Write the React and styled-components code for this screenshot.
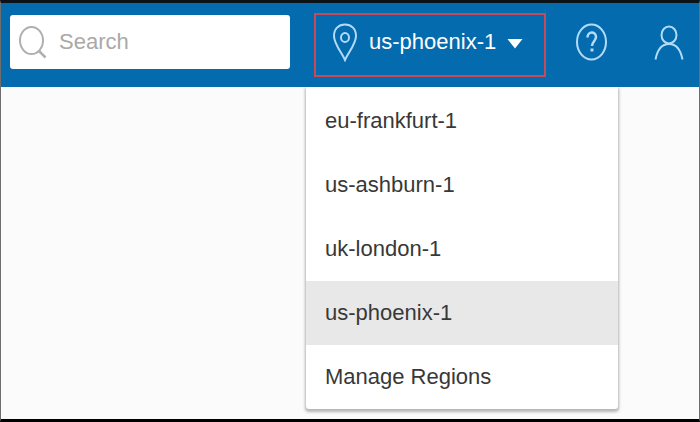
import React, { useState } from "react";
import styled, { createGlobalStyle } from "styled-components";

const colors = {
  bar: "#046bae",
  icon: "#b2dbf8",
  outline: "#c44c5a",
  text: "#383838",
  placeholder: "#a9a9a9",
};

const GlobalStyle = createGlobalStyle`
  * {
    box-sizing: border-box;
  }

  body {
    margin: 0;
    font-family: "Liberation Sans", Arial, sans-serif;
    font-size: 22px;
    line-height: 28px;
  }

  button,
  input {
    font: inherit;
  }
`;

const Page = styled.div`
  min-height: 100vh;
  background: #fbfbfb;
  border: 1px solid #6e6e6e;
  border-top: 3px solid #0b1218;
  border-bottom: 3px solid #000;
`;

const TopBar = styled.header`
  display: flex;
  align-items: center;
  height: 84px;
  padding: 0 14px 0 9px;
  background: ${colors.bar};
`;

const SearchBox = styled.label`
  display: flex;
  flex: 1;
  align-items: center;
  gap: 12px;
  min-width: 0;
  height: 54px;
  margin: 0 24px 6px 0;
  padding: 0 9px;
  background: #fff;
  border-radius: 3px;
`;

const SearchInput = styled.input`
  flex: 1;
  min-width: 0;
  padding: 0;
  border: 0;
  outline: 0;
  background: transparent;
  color: ${colors.text};

  &::placeholder {
    color: ${colors.placeholder};
    opacity: 1;
  }
`;

const RegionPicker = styled.div`
  position: relative;
  display: flex;
  align-items: center;
  height: 100%;
`;

const RegionButton = styled.button`
  display: flex;
  align-items: center;
  gap: 11px;
  width: 232px;
  height: 64px;
  padding: 0 16px 6px;
  background: transparent;
  border: 2px solid ${colors.outline};
  color: #fff;
  cursor: pointer;
`;

const Menu = styled.ul`
  position: absolute;
  top: 100%;
  left: -8px;
  width: 312px;
  margin: 0;
  padding: 2px 0 0;
  list-style: none;
  background: #fff;
  border-radius: 0 0 3px 3px;
  box-shadow: 0 2px 3px 1px rgba(0, 0, 0, 0.28);
  clip-path: inset(0 -8px -8px);
`;

const MenuItem = styled.button`
  display: block;
  width: 100%;
  height: 64px;
  padding: 0 19px;
  border: 0;
  background: ${({ $active }) => ($active ? "#e8e8e8" : "transparent")};
  color: ${colors.text};
  text-align: left;
  cursor: pointer;
`;

const IconButton = styled.button`
  display: flex;
  justify-content: center;
  width: 32px;
  margin-left: ${({ $gap }) => $gap}px;
  padding: 0 0 6px;
  border: 0;
  background: transparent;
  cursor: pointer;
`;

const Icon = styled.svg`
  flex: none;
  fill: none;
  stroke: ${({ $color }) => $color || colors.icon};
  stroke-width: 2;
`;

const Caret = styled.svg`
  flex: none;
  fill: #fff;
`;

const regions = ["eu-frankfurt-1", "us-ashburn-1", "uk-london-1", "us-phoenix-1"];

const SearchIcon = () => (
  <Icon width="28" height="34" viewBox="0 0 28 34" $color="#b0b0b0" aria-hidden="true">
    <ellipse cx="12.500" cy="15.500" rx="11.500" ry="13.500" />
    <path d="M20 26 L26.500 32.500" strokeWidth="2.500" />
  </Icon>
);

const PinIcon = () => (
  <Icon width="26" height="40" viewBox="0 0 26 40" aria-hidden="true">
    <path d="M13 38 C10 31 2 22 2 14 C2 7 6.500 2.500 13 2.500 C19.500 2.500 24 7 24 14 C24 22 16 31 13 38 Z" />
    <ellipse cx="13" cy="15.500" rx="4" ry="4.500" />
  </Icon>
);

const HelpIcon = () => (
  <Icon width="32" height="38" viewBox="0 0 32 38" aria-hidden="true">
    <ellipse cx="15.500" cy="19" rx="14.500" ry="17.500" />
    <path d="M11.500 14.500 C11.500 8 20 8 20 14 C20 18 16 18.500 16 23" strokeWidth="2.500" />
    <path d="M16 25.500 V28.500" strokeWidth="3" />
  </Icon>
);

const UserIcon = () => (
  <Icon width="32" height="36" viewBox="0 0 32 36" aria-hidden="true">
    <ellipse cx="16" cy="11" rx="7.500" ry="8.500" />
    <path d="M2.500 35.500 C4.500 25 9 20 16 20 C23 20 27.500 25 29.500 35.500" />
  </Icon>
);

const App = () => {
  const [region, setRegion] = useState("us-phoenix-1");
  const [open, setOpen] = useState(true);

  return (
    <>
      <GlobalStyle />
      <Page>
        <TopBar>
          <SearchBox>
            <SearchIcon />
            <SearchInput type="text" placeholder="Search" aria-label="Search" />
          </SearchBox>

          <RegionPicker>
            <RegionButton type="button" aria-expanded={open} onClick={() => setOpen(!open)}>
              <PinIcon />
              {region}
              <Caret width="16" height="14" viewBox="0 0 16 14" aria-hidden="true">
                <path d="M0.500 4 H15.500 L8 13.500 Z" />
              </Caret>
            </RegionButton>
            {open && (
              <Menu>
                {regions.map((name) => (
                  <li key={name}>
                    <MenuItem type="button" $active={name === region} onClick={() => setRegion(name)}>
                      {name}
                    </MenuItem>
                  </li>
                ))}
                <li>
                  <MenuItem type="button">Manage Regions</MenuItem>
                </li>
              </Menu>
            )}
          </RegionPicker>

          <IconButton type="button" aria-label="Help" $gap={30}>
            <HelpIcon />
          </IconButton>
          <IconButton type="button" aria-label="Profile" $gap={45}>
            <UserIcon />
          </IconButton>
        </TopBar>
      </Page>
    </>
  );
};

export default App;
